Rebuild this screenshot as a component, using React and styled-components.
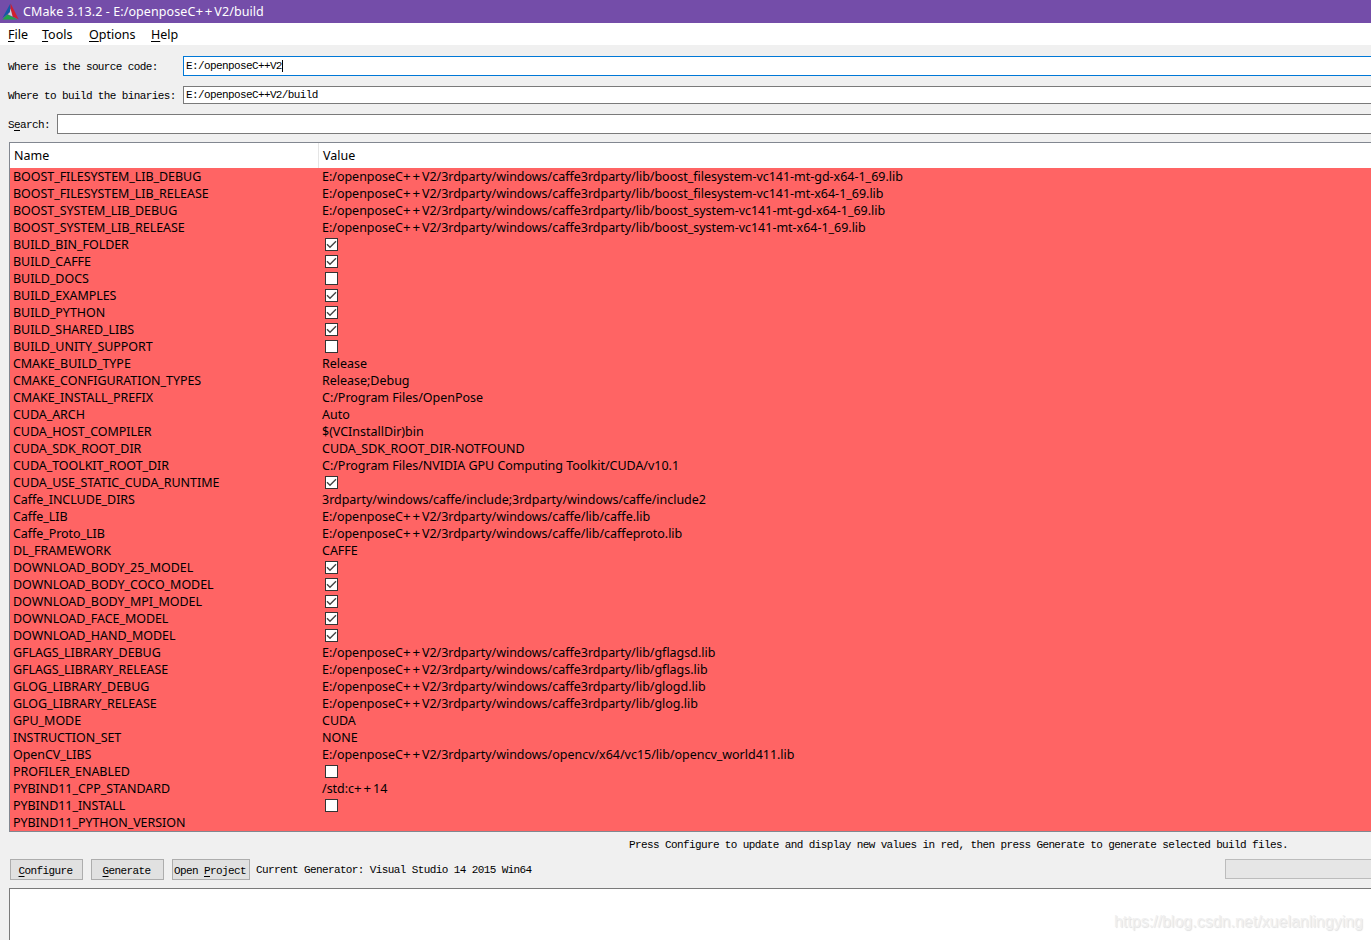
import React from "react";
import styled, { createGlobalStyle } from "styled-components";

const GlobalStyle = createGlobalStyle`
  * {
    box-sizing: border-box;
  }
  body {
    margin: 0;
    overflow: hidden;
    background-color: #f0f0f0;
  }
`;

const lib3rd = "E:/openposeC++V2/3rdparty/windows/caffe3rdparty/lib/";

const entries = [
  { name: "BOOST_FILESYSTEM_LIB_DEBUG", value: lib3rd + "boost_filesystem-vc141-mt-gd-x64-1_69.lib" },
  { name: "BOOST_FILESYSTEM_LIB_RELEASE", value: lib3rd + "boost_filesystem-vc141-mt-x64-1_69.lib" },
  { name: "BOOST_SYSTEM_LIB_DEBUG", value: lib3rd + "boost_system-vc141-mt-gd-x64-1_69.lib" },
  { name: "BOOST_SYSTEM_LIB_RELEASE", value: lib3rd + "boost_system-vc141-mt-x64-1_69.lib" },
  { name: "BUILD_BIN_FOLDER", value: true },
  { name: "BUILD_CAFFE", value: true },
  { name: "BUILD_DOCS", value: false },
  { name: "BUILD_EXAMPLES", value: true },
  { name: "BUILD_PYTHON", value: true },
  { name: "BUILD_SHARED_LIBS", value: true },
  { name: "BUILD_UNITY_SUPPORT", value: false },
  { name: "CMAKE_BUILD_TYPE", value: "Release" },
  { name: "CMAKE_CONFIGURATION_TYPES", value: "Release;Debug" },
  { name: "CMAKE_INSTALL_PREFIX", value: "C:/Program Files/OpenPose" },
  { name: "CUDA_ARCH", value: "Auto" },
  { name: "CUDA_HOST_COMPILER", value: "$(VCInstallDir)bin" },
  { name: "CUDA_SDK_ROOT_DIR", value: "CUDA_SDK_ROOT_DIR-NOTFOUND" },
  { name: "CUDA_TOOLKIT_ROOT_DIR", value: "C:/Program Files/NVIDIA GPU Computing Toolkit/CUDA/v10.1" },
  { name: "CUDA_USE_STATIC_CUDA_RUNTIME", value: true },
  { name: "Caffe_INCLUDE_DIRS", value: "3rdparty/windows/caffe/include;3rdparty/windows/caffe/include2" },
  { name: "Caffe_LIB", value: "E:/openposeC++V2/3rdparty/windows/caffe/lib/caffe.lib" },
  { name: "Caffe_Proto_LIB", value: "E:/openposeC++V2/3rdparty/windows/caffe/lib/caffeproto.lib" },
  { name: "DL_FRAMEWORK", value: "CAFFE" },
  { name: "DOWNLOAD_BODY_25_MODEL", value: true },
  { name: "DOWNLOAD_BODY_COCO_MODEL", value: true },
  { name: "DOWNLOAD_BODY_MPI_MODEL", value: true },
  { name: "DOWNLOAD_FACE_MODEL", value: true },
  { name: "DOWNLOAD_HAND_MODEL", value: true },
  { name: "GFLAGS_LIBRARY_DEBUG", value: lib3rd + "gflagsd.lib" },
  { name: "GFLAGS_LIBRARY_RELEASE", value: lib3rd + "gflags.lib" },
  { name: "GLOG_LIBRARY_DEBUG", value: lib3rd + "glogd.lib" },
  { name: "GLOG_LIBRARY_RELEASE", value: lib3rd + "glog.lib" },
  { name: "GPU_MODE", value: "CUDA" },
  { name: "INSTRUCTION_SET", value: "NONE" },
  { name: "OpenCV_LIBS", value: "E:/openposeC++V2/3rdparty/windows/opencv/x64/vc15/lib/opencv_world411.lib" },
  { name: "PROFILER_ENABLED", value: false },
  { name: "PYBIND11_CPP_STANDARD", value: "/std:c++14" },
  { name: "PYBIND11_INSTALL", value: false },
  { name: "PYBIND11_PYTHON_VERSION", value: "" },
];

function Logo() {
  return (
    <svg width="17" height="17" viewBox="0 0 17 17">
      <path d="M8.4 0.6 L0.4 15 L5.6 11 L8.4 8 Z" fill="#1459a6" />
      <path d="M8.6 0.6 L16.6 16.2 L10.6 13.6 L8.6 7 Z" fill="#d01f2e" />
      <path d="M0.4 16.4 L5.4 11.6 L15.6 16.4 Z" fill="#1fa54a" />
      <path d="M8.5 5.6 L10.6 13.4 L5.8 11.3 L7.8 9.4 Z" fill="#c9ccd6" />
    </svg>
  );
}

// the plus signs are set wider than the rest of the path
function Path({ text }) {
  const parts = text.split("++");
  return (
    <span>
      {parts[0]}
      {parts.length > 1 && <Plus>++</Plus>}
      {parts[1]}
    </span>
  );
}

function CheckBox({ checked }) {
  return (
    <Check>
      {checked && (
        <svg width="11" height="11" viewBox="0 0 11 11">
          <path d="M1 5.2 L4 8.2 L10 2.2" fill="none" stroke="#444" strokeWidth="1.4" />
        </svg>
      )}
    </Check>
  );
}

function Value({ value }) {
  if (typeof value === "boolean") {
    return <CheckBox checked={value} />;
  }
  return (
    <ValueText>
      <Path text={value} />
    </ValueText>
  );
}

export default function App() {
  return (
    <Window>
      <GlobalStyle />
      <TitleBar>
        <Logo />
        <Path text="CMake 3.13.2 - E:/openposeC++V2/build" />
      </TitleBar>
      <MenuBar>
        <MenuItem $width={34}><u>F</u>ile</MenuItem>
        <MenuItem $width={47}><u>T</u>ools</MenuItem>
        <MenuItem $width={62}><u>O</u>ptions</MenuItem>
        <MenuItem $width={40}><u>H</u>elp</MenuItem>
      </MenuBar>
      <Field $height={20} $gap={10}>
        <Label $width={175}>Where is the source code:</Label>
        <Input $focus>E:/openposeC++V2<Caret /></Input>
      </Field>
      <Field $height={18} $gap={10}>
        <Label $width={175}>Where to build the binaries:</Label>
        <Input>E:/openposeC++V2/build</Input>
      </Field>
      <Field $height={20} $gap={8}>
        <Label $width={49}><span>S<u>e</u>arch:</span></Label>
        <Input />
      </Field>
      <Table>
        <Header>
          <NameHead>Name</NameHead>
          <ValueHead>Value</ValueHead>
        </Header>
        {entries.map((entry) => (
          <Row key={entry.name}>
            <Name>{entry.name}</Name>
            <Value value={entry.value} />
          </Row>
        ))}
      </Table>
      <Hint>
        Press Configure to update and display new values in red, then press Generate to generate selected build files.
      </Hint>
      <Actions>
        <Button $width={73}><u>C</u>onfigure</Button>
        <Button $width={73}><u>G</u>enerate</Button>
        <Button $width={78}>Open <u>P</u>roject</Button>
        <Generator>Current Generator: Visual Studio 14 2015 Win64</Generator>
        <Progress />
      </Actions>
      <Output>
        <Watermark>https://blog.csdn.net/xuelanlingying</Watermark>
      </Output>
    </Window>
  );
}

const Window = styled.div`
  display: flex;
  flex-direction: column;
  width: 1371px;
  height: 940px;
  overflow: hidden;
  background-color: #f0f0f0;
  color: #000;
  font-family: "Liberation Mono", monospace;
  font-size: 11px;
  letter-spacing: -0.61px;
  white-space: pre;
  u {
    text-underline-offset: 2px;
    text-decoration-thickness: 1px;
  }
`;

const TitleBar = styled.div`
  display: flex;
  align-items: center;
  gap: 4px;
  height: 23px;
  flex-shrink: 0;
  padding-left: 2px;
  background-color: #744da9;
  color: #fff;
  font-family: "Noto Sans", sans-serif;
  font-size: 12.5px;
  letter-spacing: 0.08px;
`;

const MenuBar = styled.div`
  display: flex;
  align-items: center;
  height: 22px;
  flex-shrink: 0;
  margin-bottom: 11px;
  padding-left: 8px;
  background-color: #fff;
  font-family: "Noto Sans", sans-serif;
  font-size: 12.5px;
  letter-spacing: 0;
`;

const MenuItem = styled.div`
  width: ${(props) => props.$width}px;
`;

const Field = styled.div`
  display: flex;
  flex-shrink: 0;
  height: ${(props) => props.$height}px;
  margin-bottom: ${(props) => props.$gap}px;
  padding-left: 8px;
`;

const Label = styled.div`
  display: flex;
  align-items: center;
  width: ${(props) => props.$width}px;
  padding-top: 2px;
`;

const Input = styled.div`
  display: flex;
  align-items: center;
  flex: 1;
  padding-left: 2px;
  background-color: #fff;
  border: 1px solid ${(props) => (props.$focus ? "#0078d7" : "#7a7a7a")};
  border-right: none;
`;

const Caret = styled.span`
  width: 1px;
  height: 12px;
  background-color: #000;
`;

const Table = styled.div`
  flex-shrink: 0;
  height: 690px;
  margin-left: 9px;
  border: 1px solid #828790;
  border-right: none;
  background-color: #ff6464;
  font-family: "Noto Sans", sans-serif;
  font-size: 12.5px;
  letter-spacing: 0;
`;

const Header = styled.div`
  display: flex;
  height: 25px;
  line-height: 25px;
  background-color: #fff;
`;

const NameHead = styled.div`
  width: 309px;
  padding-left: 4px;
  border-right: 1px solid #e5e5e5;
`;

const ValueHead = styled.div`
  padding-left: 4px;
`;

const Row = styled.div`
  display: flex;
  align-items: center;
  height: 17px;
  line-height: 17px;
`;

const Name = styled.div`
  width: 312px;
  padding-left: 3px;
  letter-spacing: -0.06px;
`;

const ValueText = styled.div`
  letter-spacing: -0.02px;
`;

const Plus = styled.span`
  font-family: "Liberation Sans", sans-serif;
  font-size: 13px;
  line-height: 0;
  letter-spacing: 1.9px;
`;

const Check = styled.div`
  width: 13px;
  height: 13px;
  margin-left: 3px;
  border: 1px solid #333;
  background-color: #fff;
  svg {
    display: block;
  }
`;

const Hint = styled.div`
  flex-shrink: 0;
  height: 27px;
  line-height: 26px;
  padding-left: 629px;
`;

const Actions = styled.div`
  display: flex;
  flex-shrink: 0;
  height: 29px;
  padding-left: 10px;
`;

const Button = styled.div`
  display: flex;
  align-items: center;
  justify-content: center;
  width: ${(props) => props.$width}px;
  height: 21px;
  margin-right: 8px;
  padding: 2px 2px 0 0;
  border: 1px solid #adadad;
  background-color: #e1e1e1;
`;

const Generator = styled.div`
  width: 969px;
  margin-left: -2px;
  line-height: 23px;
`;

const Progress = styled.div`
  flex: 1;
  height: 20px;
  border: 1px solid #bcbcbc;
  border-right: none;
  background-color: #e6e6e6;
`;

const Output = styled.div`
  display: flex;
  justify-content: flex-end;
  flex: 1;
  margin-left: 9px;
  padding: 24px 8px 0 0;
  border: 1px solid #7a7a7a;
  border-width: 1px 0 0 1px;
  background-color: #fff;
`;

const Watermark = styled.div`
  color: #f0f0f0;
  font-family: "Liberation Sans", sans-serif;
  font-size: 16px;
  letter-spacing: 0;
  text-shadow: 1px 1px 1px #e0e0e0;
`;
